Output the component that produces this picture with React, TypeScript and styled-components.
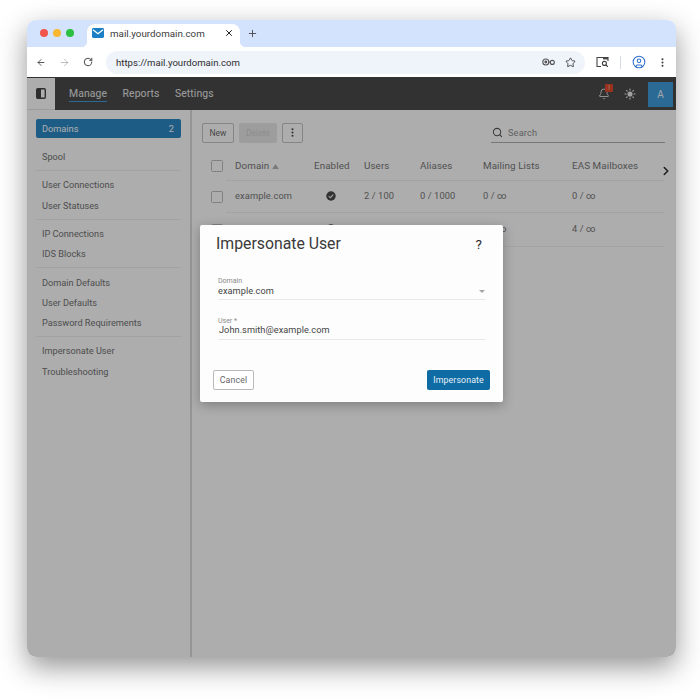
import React from "react";
import styled, { createGlobalStyle } from "styled-components";
import { ArrowLeft, ArrowRight, RotateCw, X, Plus, Star, EllipsisVertical, Bell, Sun, Search, ChevronRight, CircleUser } from "lucide-react";

const Global = createGlobalStyle`
  html, body { margin: 0; padding: 0; background: #fff; }
  body { font-family: Roboto, "Liberation Sans", sans-serif; }
  * { box-sizing: border-box; }
`;
const Page = styled.div`
  width: 700px;
  height: 700px;
  padding: 20px 24px 43px 27px;
  overflow: hidden;
`;
const Window = styled.div`
  width: 649px;
  height: 637px;
  border-radius: 9px;
  overflow: hidden;
  display: flex;
  flex-direction: column;
  background: #fff;
  box-shadow: 0 10px 28px rgba(0, 0, 0, 0.42);
`;
const TabStrip = styled.div`
  height: 27px;
  flex: none;
  background: #d3e3fd;
  display: flex;
  align-items: flex-end;
  padding-left: 13px;
`;
const Lights = styled.div`
  display: flex;
  gap: 5px;
  align-self: flex-start;
  margin-top: 9px;
  width: 47px;
`;
const Light = styled.span<{ $c: string }>`
  width: 8px;
  height: 8px;
  border-radius: 50%;
  background: ${(p) => p.$c};
`;
const Tab = styled.div`
  position: relative;
  width: 153px;
  height: 23px;
  background: #fff;
  border-radius: 8px 8px 0 0;
  display: flex;
  align-items: center;
  padding: 0 6px 5px 5px;
  font-size: 9.8px;
  color: #3c3c3c;
  &::before, &::after {
    content: "";
    position: absolute;
    bottom: 0;
    width: 6px;
    height: 6px;
  }
  &::before { left: -6px; background: radial-gradient(circle at 0 0, #d3e3fd 6px, #fff 6.5px); }
  &::after { right: -6px; background: radial-gradient(circle at 100% 0, #d3e3fd 6px, #fff 6.5px); }
`;
const TabTitle = styled.span`
  margin-left: 6px;
  flex: 1;
`;
const NewTab = styled.span`
  display: flex;
  margin: 0 0 8px 7px;
  color: #3c3c3c;
`;
const Toolbar = styled.div`
  height: 31px;
  flex: none;
  background: #fff;
  display: flex;
  align-items: center;
  padding-left: 9px;
  border-bottom: 1px solid #333;
`;
const NavIcon = styled.span<{ $w: number; $c?: string }>`
  display: flex;
  align-items: center;
  justify-content: center;
  flex: none;
  width: ${(p) => p.$w}px;
  color: ${(p) => p.$c || "#3a3a3a"};
`;
const Omnibox = styled.div`
  width: 479px;
  height: 23px;
  margin-left: 12px;
  border-radius: 12px;
  background: #eff3fa;
  display: flex;
  align-items: center;
  padding: 0 0 0 10px;
  font-size: 9.6px;
  color: #2e2e2e;
`;
const Url = styled.span`
  flex: 1;
`;
const ToolDivider = styled.span`
  width: 1px;
  height: 13px;
  background: #d6dbe3;
`;
const App = styled.div`
  position: relative;
  flex: 1;
  min-height: 0;
  display: flex;
  flex-direction: column;
  background: #fff;
`;
const TopBar = styled.div`
  height: 32px;
  flex: none;
  display: flex;
  align-items: center;
  background: #4b4b4b;
  padding-right: 3px;
`;
const ToggleCell = styled.div`
  width: 28px;
  height: 100%;
  background: #fff;
  display: flex;
  align-items: center;
  justify-content: center;
  border-bottom: 1px solid #e6e6e6;
`;
const TopNav = styled.nav`
  display: flex;
  gap: 15.5px;
  margin-left: 14px;
  flex: 1;
`;
const TopLink = styled.span<{ $active?: boolean }>`
  font-size: 10.4px;
  letter-spacing: 0.1px;
  color: #e8e8e8;
  padding-bottom: 1px;
  border-bottom: 1px solid ${(p) => (p.$active ? "#3e9cdc" : "transparent")};
`;
const BellWrap = styled.span`
  position: relative;
  display: flex;
  color: #f4f4f4;
  margin-right: 14px;
`;
const Badge = styled.span`
  position: absolute;
  top: -4px;
  right: -3px;
  width: 8px;
  height: 8px;
  border-radius: 1px;
  background: #e0492c;
  color: #f5d9a8;
  font-size: 6.5px;
  line-height: 8px;
  text-align: center;
`;
const SunWrap = styled.span`
  display: flex;
  color: #f0f0f0;
  margin-right: 12px;
`;
const Avatar = styled.div`
  width: 25px;
  height: 25px;
  background: #3e9cdc;
  color: #f0f6fb;
  font-size: 10px;
  display: flex;
  align-items: center;
  justify-content: center;
`;
const Body = styled.div`
  flex: 1;
  min-height: 0;
  display: flex;
`;
const Sidebar = styled.aside`
  width: 165px;
  flex: none;
  border-right: 2px solid #dcdcdc;
  padding: 9px 9px 0;
`;
const ActiveItem = styled.div`
  height: 19px;
  border-radius: 2px;
  background: #2b88c5;
  color: #fff;
  display: flex;
  align-items: center;
  justify-content: space-between;
  padding: 0 7px 1px 6px;
  font-size: 9.2px;
  margin-bottom: 8.5px;
`;
const NavItem = styled.div`
  height: 20.2px;
  display: flex;
  align-items: center;
  padding-left: 6px;
  font-size: 9.2px;
  color: #747474;
`;
const NavDivider = styled.div`
  height: 1px;
  background: #efefef;
  margin: 3.6px 0;
`;
const Main = styled.main`
  flex: 1;
  min-width: 0;
  padding: 13px 11px 0 10px;
`;
const Actions = styled.div`
  display: flex;
  align-items: stretch;
  height: 20px;
  gap: 5px;
  margin-bottom: 7px;
`;
const OutlineBtn = styled.button<{ $w: number }>`
  width: ${(p) => p.$w}px;
  padding: 0 0 1px;
  background: transparent;
  border: 1px solid #c4c4c4;
  border-radius: 2px;
  font: 400 8.5px Roboto, sans-serif;
  color: #6a6a6a;
  display: flex;
  align-items: center;
  justify-content: center;
`;
const DisabledBtn = styled.button`
  width: 38px;
  padding: 0 0 1px;
  background: #e8e8e8;
  border: none;
  border-radius: 2px;
  font: 400 8.5px Roboto, sans-serif;
  color: #d0d0d0;
`;
const SearchBox = styled.div`
  margin-left: auto;
  width: 174px;
  display: flex;
  align-items: center;
  gap: 5px;
  padding: 0 0 1px 1px;
  border-bottom: 1px solid #b0b0b0;
  font-size: 9.2px;
  color: #8f8f8f;
  letter-spacing: 0.15px;
`;
const TableWrap = styled.div`
  position: relative;
`;
const Row = styled.div<{ $h: number }>`
  display: grid;
  grid-template-columns: 24px 88px 50px 56px 63px 89px 93px;
  height: ${(p) => p.$h}px;
  align-items: stretch;
`;
const BoxCell = styled.div`
  display: flex;
  align-items: center;
  justify-content: flex-end;
  padding-right: 3px;
`;
const Box = styled.span`
  width: 12px;
  height: 12px;
  border: 1px solid #bdbdbd;
  border-radius: 1.5px;
`;
const Cell = styled.div<{ $head?: boolean; $pad?: number }>`
  display: flex;
  align-items: center;
  gap: 3px;
  padding-left: ${(p) => p.$pad || 0}px;
  padding-bottom: ${(p) => (p.$head ? 0 : 2)}px;
  font-size: ${(p) => (p.$head ? 9.8 : 9.3)}px;
  letter-spacing: 0.1px;
  color: #787878;
  border-bottom: 1px solid #f0f0f0;
`;
const SortMark = styled.svg`
  width: 7px;
  height: 5px;
  margin-top: 2px;
`;
const Scroller = styled.span`
  position: absolute;
  top: 14px;
  right: -8px;
  display: flex;
  color: #2c2c2c;
`;
const Scrim = styled.div`
  position: absolute;
  inset: 0;
  background: rgba(0, 0, 0, 0.32);
  display: flex;
  justify-content: center;
  align-items: flex-start;
  padding-top: 147px;
`;
const Dialog = styled.section`
  width: 303px;
  height: 177px;
  background: #fdfdfd;
  border-radius: 2px;
  box-shadow: 0 3px 12px rgba(0, 0, 0, 0.28);
  display: flex;
  flex-direction: column;
`;
const DialogHead = styled.header`
  height: 52px;
  display: flex;
  align-items: flex-start;
  justify-content: space-between;
  padding: 10px 21px 0 16px;
`;
const DialogTitle = styled.h2`
  margin: 0;
  font-size: 15.8px;
  line-height: 18px;
  font-weight: 400;
  color: #3a3a3a;
`;
const Help = styled.span`
  font-size: 13.5px;
  line-height: 19px;
  font-weight: 400;
  color: #2e2e2e;
`;
const Field = styled.div<{ $pad: number; $lift?: number }>`
  position: relative;
  margin: 0 17px 17px 18px;
  padding: 0 0 ${(p) => 2 + (p.$lift || 0)}px ${(p) => p.$pad}px;
  border-bottom: 1px solid #e8e8e8;
`;
const FieldLabel = styled.label<{ $shift?: number }>`
  display: block;
  margin-left: -${(p) => p.$shift || 0}px;
  font-size: 7px;
  line-height: 8px;
  color: #8a8a8a;
`;
const FieldValue = styled.div<{ $lift?: number }>`
  margin-top: -${(p) => p.$lift || 0}px;
  font-size: 9.2px;
  line-height: 12px;
  letter-spacing: 0.05px;
  color: #444;
`;
const Caret = styled.span`
  position: absolute;
  right: 1px;
  top: 12.5px;
  width: 0;
  height: 0;
  border-left: 3.5px solid transparent;
  border-right: 3.5px solid transparent;
  border-top: 3.5px solid #a4a4a4;
`;
const DialogFoot = styled.footer`
  margin-top: auto;
  padding: 0 13px 12px;
  display: flex;
  justify-content: space-between;
`;
const CancelBtn = styled.button`
  width: 41px;
  height: 20px;
  padding: 0;
  background: #fff;
  border: 1px solid #bbb;
  border-radius: 2px;
  font: 400 8.8px Roboto, sans-serif;
  letter-spacing: 0.1px;
  color: #666;
`;
const PrimaryBtn = styled.button`
  width: 63px;
  height: 20px;
  padding: 0;
  background: #0f6ba3;
  border: none;
  border-radius: 2px;
  font: 400 8.8px Roboto, sans-serif;
  letter-spacing: 0.1px;
  color: #e6f2fa;
`;

const MailIcon = () => (
  <svg width="12" height="10" viewBox="0 0 12 10">
    <rect width="12" height="10" rx="1.4" fill="#1a7fc4" />
    <path d="M1 1.8 6 5.8 11 1.8" fill="none" stroke="#fff" strokeWidth="1.2" />
  </svg>
);
const KeyIcon = () => (
  <svg width="13" height="8" viewBox="0 0 13 8" fill="none" stroke="#555" strokeWidth="1.1">
    <circle cx="3.8" cy="4" r="3" />
    <circle cx="3.8" cy="4" r="0.9" fill="#555" />
    <path d="M6.8 4h1.5" />
    <circle cx="10.3" cy="4.4" r="2" />
  </svg>
);
const TabSearchIcon = () => (
  <svg width="13" height="12" viewBox="0 0 13 12" fill="none" stroke="#444" strokeWidth="1.1">
    <path d="M5 10.5H1V1.5h11v3.5" />
    <rect x="7" y="1" width="5" height="2.4" fill="#444" stroke="none" />
    <circle cx="8.4" cy="7.4" r="2" />
    <path d="M10 9l1.8 1.8" />
  </svg>
);
const PanelIcon = () => (
  <svg width="10" height="11" viewBox="0 0 10 11">
    <rect x="0.7" y="0.7" width="8.6" height="9.6" rx="1.2" fill="none" stroke="#444" strokeWidth="1.4" />
    <rect x="1" y="1" width="4" height="9" fill="#444" />
  </svg>
);
const EnabledIcon = () => (
  <svg width="10" height="10" viewBox="0 0 11 11">
    <circle cx="5.5" cy="5.5" r="5.2" fill="#4b4b4b" />
    <path d="M3 5.6 4.8 7.3 8 3.9" fill="none" stroke="#eee" strokeWidth="1.2" />
  </svg>
);

const rows = [
  ["example.com", "2 / 100", "0 / 1000", "0 / ∞", "0 / ∞"],
  ["example.net", "1 / 100", "0 / 1000", "0 / ∞", "4 / ∞"],
];

export default function AppPage() {
  return (
    <Page>
      <Global />
      <Window>
        <TabStrip>
          <Lights>
            <Light $c="#f2544c" />
            <Light $c="#f7b731" />
            <Light $c="#2bc040" />
          </Lights>
          <Tab>
            <MailIcon />
            <TabTitle>mail.yourdomain.com</TabTitle>
            <X size={10} strokeWidth={2.4} color="#222" />
          </Tab>
          <NewTab>
            <Plus size={11} strokeWidth={1.8} />
          </NewTab>
        </TabStrip>
        <Toolbar>
          <NavIcon $w={10}><ArrowLeft size={11} strokeWidth={2} /></NavIcon>
          <NavIcon $w={36} $c="#a9a9a9"><ArrowRight size={11} strokeWidth={1.6} /></NavIcon>
          <NavIcon $w={12}><RotateCw size={10} strokeWidth={2.2} /></NavIcon>
          <Omnibox>
            <Url>https://mail.yourdomain.com</Url>
            <KeyIcon />
            <NavIcon $w={30}><Star size={11} strokeWidth={1.9} /></NavIcon>
          </Omnibox>
          <NavIcon $w={35}><TabSearchIcon /></NavIcon>
          <ToolDivider />
          <NavIcon $w={35} $c="#2f6fd0"><CircleUser size={14} strokeWidth={1.8} /></NavIcon>
          <NavIcon $w={12}><EllipsisVertical size={11} strokeWidth={2.4} /></NavIcon>
        </Toolbar>
        <App>
          <TopBar>
            <ToggleCell><PanelIcon /></ToggleCell>
            <TopNav>
              <TopLink $active>Manage</TopLink>
              <TopLink>Reports</TopLink>
              <TopLink>Settings</TopLink>
            </TopNav>
            <BellWrap>
              <Bell size={12} strokeWidth={1.6} />
              <Badge>!</Badge>
            </BellWrap>
            <SunWrap><Sun size={12} strokeWidth={2.2} fill="currentColor" /></SunWrap>
            <Avatar>A</Avatar>
          </TopBar>
          <Body>
            <Sidebar>
              <ActiveItem><span>Domains</span><span>2</span></ActiveItem>
              <NavItem>Spool</NavItem>
              <NavDivider />
              <NavItem>User Connections</NavItem>
              <NavItem>User Statuses</NavItem>
              <NavDivider />
              <NavItem>IP Connections</NavItem>
              <NavItem>IDS Blocks</NavItem>
              <NavDivider />
              <NavItem>Domain Defaults</NavItem>
              <NavItem>User Defaults</NavItem>
              <NavItem>Password Requirements</NavItem>
              <NavDivider />
              <NavItem>Impersonate User</NavItem>
              <NavItem>Troubleshooting</NavItem>
            </Sidebar>
            <Main>
              <Actions>
                <OutlineBtn $w={32}>New</OutlineBtn>
                <DisabledBtn>Delete</DisabledBtn>
                <OutlineBtn $w={21}><EllipsisVertical size={11} strokeWidth={2.4} color="#4a4a4a" /></OutlineBtn>
                <SearchBox>
                  <Search size={11} strokeWidth={2.2} color="#555" />
                  <span>Search</span>
                </SearchBox>
              </Actions>
              <TableWrap>
                <Row $h={31}>
                  <BoxCell><Box /></BoxCell>
                  <Cell $head $pad={9}>
                    Domain
                    <SortMark viewBox="0 0 8 6"><path d="M4 0 8 6H0z" fill="#b4b4b4" /></SortMark>
                  </Cell>
                  <Cell $head>Enabled</Cell>
                  <Cell $head>Users</Cell>
                  <Cell $head>Aliases</Cell>
                  <Cell $head>Mailing Lists</Cell>
                  <Cell $head>EAS Mailboxes</Cell>
                </Row>
                {rows.map((r, i) => (
                  <Row key={r[0]} $h={i === 0 ? 32 : 34}>
                    <BoxCell><Box /></BoxCell>
                    <Cell $pad={9}>{r[0]}</Cell>
                    <Cell $pad={12}><EnabledIcon /></Cell>
                    <Cell>{r[1]}</Cell>
                    <Cell>{r[2]}</Cell>
                    <Cell>{r[3]}</Cell>
                    <Cell>{r[4]}</Cell>
                  </Row>
                ))}
                <Scroller><ChevronRight size={14} strokeWidth={2.6} /></Scroller>
              </TableWrap>
            </Main>
          </Body>
          <Scrim>
            <Dialog>
              <DialogHead>
                <DialogTitle>Impersonate User</DialogTitle>
                <Help>?</Help>
              </DialogHead>
              <Field $pad={0}>
                <FieldLabel>Domain</FieldLabel>
                <FieldValue>example.com</FieldValue>
                <Caret />
              </Field>
              <Field $pad={1} $lift={1}>
                <FieldLabel $shift={1}>User *</FieldLabel>
                <FieldValue $lift={1}>John.smith@example.com</FieldValue>
              </Field>
              <DialogFoot>
                <CancelBtn>Cancel</CancelBtn>
                <PrimaryBtn>Impersonate</PrimaryBtn>
              </DialogFoot>
            </Dialog>
          </Scrim>
        </App>
      </Window>
    </Page>
  );
}
